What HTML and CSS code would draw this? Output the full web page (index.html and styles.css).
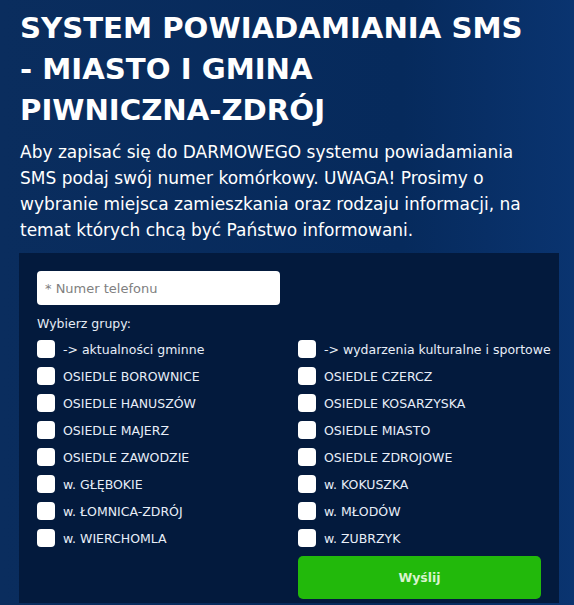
FILE: index.html
```html
<!DOCTYPE html>
<html lang="pl">
<head>
<meta charset="utf-8">
<title>System powiadamiania SMS</title>
<link rel="stylesheet" href="styles.css">
</head>
<body>
<main class="page">
  <h1 class="title">SYSTEM POWIADAMIANIA SMS - MIASTO I GMINA <span class="nowrap">PIWNICZNA-ZDRÓJ</span></h1>
  <p class="intro">Aby zapisać się do DARMOWEGO systemu powiadamiania SMS podaj swój numer komórkowy. UWAGA! Prosimy o wybranie miejsca zamieszkania oraz rodzaju informacji, na temat których chcą być Państwo informowani.</p>
  <form class="panel">
    <input class="phone" type="text" placeholder="* Numer telefonu">
    <div class="groups-label">Wybierz grupy:</div>
    <div class="groups">
      <label class="opt"><span class="box"></span>-&gt; aktualności gminne</label>
      <label class="opt"><span class="box"></span>-&gt; wydarzenia kulturalne i sportowe</label>
      <label class="opt"><span class="box"></span>OSIEDLE BOROWNICE</label>
      <label class="opt"><span class="box"></span>OSIEDLE CZERCZ</label>
      <label class="opt"><span class="box"></span>OSIEDLE HANUSZÓW</label>
      <label class="opt"><span class="box"></span>OSIEDLE KOSARZYSKA</label>
      <label class="opt"><span class="box"></span>OSIEDLE MAJERZ</label>
      <label class="opt"><span class="box"></span>OSIEDLE MIASTO</label>
      <label class="opt"><span class="box"></span>OSIEDLE ZAWODZIE</label>
      <label class="opt"><span class="box"></span>OSIEDLE ZDROJOWE</label>
      <label class="opt"><span class="box"></span>w. GŁĘBOKIE</label>
      <label class="opt"><span class="box"></span>w. KOKUSZKA</label>
      <label class="opt"><span class="box"></span>w. ŁOMNICA-ZDRÓJ</label>
      <label class="opt"><span class="box"></span>w. MŁODÓW</label>
      <label class="opt"><span class="box"></span>w. WIERCHOMLA</label>
      <label class="opt"><span class="box"></span>w. ZUBRZYK</label>
      <div class="spacer"></div>
      <button class="send" type="button">Wyślij</button>
    </div>
  </form>
</main>
</body>
</html>
```
FILE: styles.css
```css
html, body {
  margin: 0;
  padding: 0;
}
body {
  background: linear-gradient(90deg, #0a2d5e 0%, #062a5c 70%, #0a3470 100%);
  font-family: "DejaVu Sans", Verdana, sans-serif;
  color: #ffffff;
  height: 605px;
  overflow: hidden;
}
.page {
  padding: 8px 15px 0 19px;
}
.title {
  margin: 0;
  padding-left: 1px;
  max-width: 505px;
  font-size: 29.2px;
  line-height: 41px;
  font-weight: bold;
}
.nowrap {
  white-space: nowrap;
}
.intro {
  margin: 8px 0 10px;
  padding-left: 1px;
  max-width: 512px;
  font-size: 17px;
  line-height: 26px;
  color: #ffffff;
}
.panel {
  background: #031a3d;
  padding: 18px 18px 4px;
}
.phone {
  display: block;
  box-sizing: border-box;
  width: 243px;
  height: 34px;
  border: none;
  border-radius: 4px;
  padding: 0 8px;
  font-family: "DejaVu Sans", Verdana, sans-serif;
  font-size: 13px;
  color: #333;
  background: #fff;
}
.phone::placeholder {
  color: #808080;
}
.groups-label {
  margin-top: 11px;
  font-size: 12.5px;
  line-height: 16px;
  color: #e6ecf5;
}
.groups {
  margin-top: 8px;
  display: grid;
  grid-template-columns: 261px 243px;
  row-gap: 9px;
}
.opt {
  display: flex;
  align-items: center;
  gap: 8px;
  height: 18px;
  font-size: 12.5px;
  color: #e8eef8;
  white-space: nowrap;
}
.box {
  width: 18px;
  height: 18px;
  flex: none;
  background: #fff;
  border-radius: 4px;
}
.send {
  height: 43px;
  border: none;
  border-radius: 5px;
  background: #22b90b;
  color: #d9f3cf;
  font-family: "DejaVu Sans", Verdana, sans-serif;
  font-weight: bold;
  font-size: 12.5px;
}
```
